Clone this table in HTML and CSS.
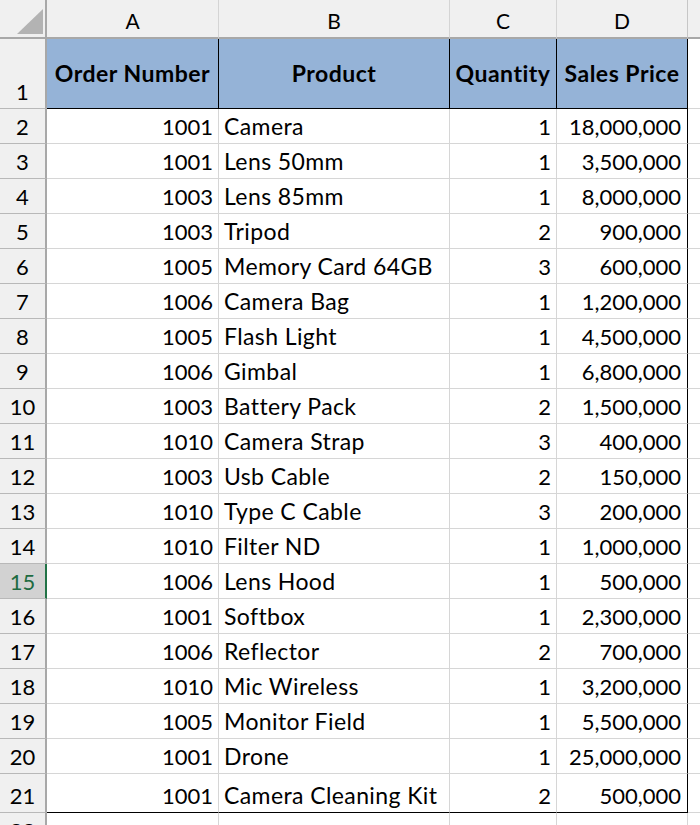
FILE: index.html
```html
<!DOCTYPE html>
<html>
<head>
<meta charset="utf-8">
<link rel="stylesheet" href="styles.css">
</head>
<body>
<div class="sheet">
  <div class="corner"><svg width="45" height="37" viewBox="0 0 45 37"><polygon points="17,34 43,34 43,9" fill="#b3b3b3"/></svg></div>
  <div class="colhead">A</div>
  <div class="colhead">B</div>
  <div class="colhead">C</div>
  <div class="colhead colhead-d">D</div>
  <div class="colhead colhead-e"></div>

  <div class="rowhead">1</div>
  <div class="hdr">Order Number</div>
  <div class="hdr">Product</div>
  <div class="hdr">Quantity</div>
  <div class="hdr">Sales Price</div>
  <div class="extra"></div>

  <div class="rowhead">2</div><div class="cell num">1001</div><div class="cell txt">Camera</div><div class="cell num">1</div><div class="cell num cold">18,000,000</div><div class="extra"></div>
  <div class="rowhead">3</div><div class="cell num">1001</div><div class="cell txt">Lens 50mm</div><div class="cell num">1</div><div class="cell num cold">3,500,000</div><div class="extra"></div>
  <div class="rowhead">4</div><div class="cell num">1003</div><div class="cell txt">Lens 85mm</div><div class="cell num">1</div><div class="cell num cold">8,000,000</div><div class="extra"></div>
  <div class="rowhead">5</div><div class="cell num">1003</div><div class="cell txt">Tripod</div><div class="cell num">2</div><div class="cell num cold">900,000</div><div class="extra"></div>
  <div class="rowhead">6</div><div class="cell num">1005</div><div class="cell txt">Memory Card 64GB</div><div class="cell num">3</div><div class="cell num cold">600,000</div><div class="extra"></div>
  <div class="rowhead">7</div><div class="cell num">1006</div><div class="cell txt">Camera Bag</div><div class="cell num">1</div><div class="cell num cold">1,200,000</div><div class="extra"></div>
  <div class="rowhead">8</div><div class="cell num">1005</div><div class="cell txt">Flash Light</div><div class="cell num">1</div><div class="cell num cold">4,500,000</div><div class="extra"></div>
  <div class="rowhead">9</div><div class="cell num">1006</div><div class="cell txt">Gimbal</div><div class="cell num">1</div><div class="cell num cold">6,800,000</div><div class="extra"></div>
  <div class="rowhead">10</div><div class="cell num">1003</div><div class="cell txt">Battery Pack</div><div class="cell num">2</div><div class="cell num cold">1,500,000</div><div class="extra"></div>
  <div class="rowhead">11</div><div class="cell num">1010</div><div class="cell txt">Camera Strap</div><div class="cell num">3</div><div class="cell num cold">400,000</div><div class="extra"></div>
  <div class="rowhead">12</div><div class="cell num">1003</div><div class="cell txt">Usb Cable</div><div class="cell num">2</div><div class="cell num cold">150,000</div><div class="extra"></div>
  <div class="rowhead">13</div><div class="cell num">1010</div><div class="cell txt">Type C Cable</div><div class="cell num">3</div><div class="cell num cold">200,000</div><div class="extra"></div>
  <div class="rowhead">14</div><div class="cell num">1010</div><div class="cell txt">Filter ND</div><div class="cell num">1</div><div class="cell num cold">1,000,000</div><div class="extra"></div>
  <div class="rowhead rowhead-sel">15</div><div class="cell num">1006</div><div class="cell txt">Lens Hood</div><div class="cell num">1</div><div class="cell num cold">500,000</div><div class="extra"></div>
  <div class="rowhead">16</div><div class="cell num">1001</div><div class="cell txt">Softbox</div><div class="cell num">1</div><div class="cell num cold">2,300,000</div><div class="extra"></div>
  <div class="rowhead">17</div><div class="cell num">1006</div><div class="cell txt">Reflector</div><div class="cell num">2</div><div class="cell num cold">700,000</div><div class="extra"></div>
  <div class="rowhead">18</div><div class="cell num">1010</div><div class="cell txt">Mic Wireless</div><div class="cell num">1</div><div class="cell num cold">3,200,000</div><div class="extra"></div>
  <div class="rowhead">19</div><div class="cell num">1005</div><div class="cell txt">Monitor Field</div><div class="cell num">1</div><div class="cell num cold">5,500,000</div><div class="extra"></div>
  <div class="rowhead">20</div><div class="cell num">1001</div><div class="cell txt">Drone</div><div class="cell num">1</div><div class="cell num cold">25,000,000</div><div class="extra"></div>
  <div class="rowhead">21</div><div class="cell num last">1001</div><div class="cell txt last">Camera Cleaning Kit</div><div class="cell num last">2</div><div class="cell num cold last">500,000</div><div class="extra"></div>

  <div class="rowhead">22</div><div class="cell"></div><div class="cell"></div><div class="cell"></div><div class="cell"></div><div class="extra"></div>
</div>
</body>
</html>
```

FILE: styles.css
```css
html, body {
  margin: 0;
  padding: 0;
  overflow: hidden;
  background: #ffffff;
}

.sheet {
  display: grid;
  grid-template-columns: 47px 172px 231px 107px 131px 80px;
  grid-template-rows: 39px 70px repeat(19, 35px) 39px 35px;
  width: 768px;
  font-family: Lato, "Open Sans", sans-serif;
  font-size: 22px;
  color: #000000;
}

.sheet > div {
  box-sizing: border-box;
  overflow: hidden;
  white-space: nowrap;
}

.corner {
  background: #f0f0f0;
  border-right: 2px solid #a8a8a8;
  border-bottom: 2px solid #a8a8a8;
}

.corner svg {
  display: block;
}

.colhead {
  background: #f0f0f0;
  border-right: 1px solid #d4d4d4;
  border-bottom: 2px solid #a8a8a8;
  display: flex;
  align-items: flex-end;
  justify-content: center;
  font-size: 21px;
  line-height: 26px;
  padding-bottom: 3px;
}

.colhead-d {
  border-right-color: #c6c6c6;
}

.rowhead {
  background: #f0f0f0;
  border-right: 2px solid #a8a8a8;
  border-bottom: 1px solid #b8b8b8;
  display: flex;
  align-items: flex-end;
  justify-content: center;
  line-height: 26px;
  padding-bottom: 3px;
}

.rowhead-sel {
  background: #d2d2d2;
  color: #1e6b41;
  border-right-color: #217346;
}

.hdr {
  background: #95b3d7;
  border-right: 1px solid #000000;
  border-bottom: 1px solid #000000;
  display: flex;
  align-items: center;
  justify-content: center;
  font-weight: 700;
  font-size: 23px;
  letter-spacing: 0.5px;
  line-height: 26px;
  padding-bottom: 2px;
}

.cell {
  border-right: 1px solid #d6d6d6;
  border-bottom: 1px solid #d6d6d6;
  display: flex;
  align-items: flex-end;
  line-height: 26px;
  padding-bottom: 3px;
}

.num {
  justify-content: flex-end;
  padding-right: 5px;
}

.txt {
  justify-content: flex-start;
  padding-left: 5px;
  padding-bottom: 4px;
  font-size: 23px;
  letter-spacing: 0.4px;
}

.cold {
  border-right-color: #000000;
  padding-right: 6px;
}

.last {
  border-bottom-color: #000000;
}

.extra {
  border-right: 1px solid #d6d6d6;
  border-bottom: 1px solid #d6d6d6;
}
```
